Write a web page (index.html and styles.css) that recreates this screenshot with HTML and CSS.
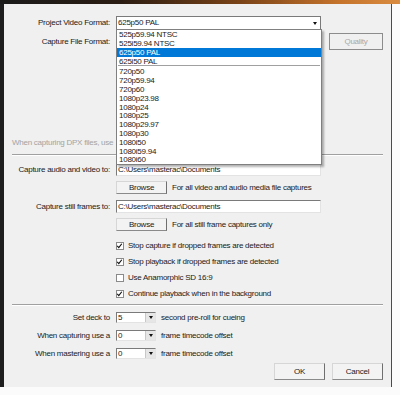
FILE: index.html
```html
<!DOCTYPE html>
<html lang="en">
<head>
    <meta charset="UTF-8">
    <meta name="viewport" content="width=device-width, initial-scale=1.0">
    <title>Capture Settings</title>
    <link rel="stylesheet" href="styles.css">
</head>
<body>
    <div class="topbar"></div>
    <div class="frame">
        <div class="dialog">
            <div class="row row-top">
                <span class="label">Project Video Format:</span>
                <div class="select wide"><span>625p50 PAL</span><i class="caret"></i></div>
            </div>
            <div class="row row-format">
                <span class="label">Capture File Format:</span>
                <!-- covered by the open list -->
                <div class="select wide"><i class="caret"></i></div>
                <button class="btn quality" disabled>Quality</button>
            </div>

            <p class="note">When capturing DPX files, use</p>
            <hr class="rule">

            <div class="row row-field">
                <span class="label">Capture audio and video to:</span>
                <div class="field">C:\Users\masterac\Documents</div>
            </div>
            <div class="row row-browse indent">
                <button class="btn browse">Browse</button>
                <span>For all video and audio media file captures</span>
            </div>
            <div class="row row-field second">
                <span class="label">Capture still frames to:</span>
                <div class="field">C:\Users\masterac\Documents</div>
            </div>
            <div class="row row-browse indent">
                <button class="btn browse">Browse</button>
                <span>For all still frame captures only</span>
            </div>

            <div class="checks">
                <label class="check"><span class="box on"><svg viewBox="0 0 8 8"><path d="M1.4 3.8 L3.2 5.9 L6.6 1.4"/></svg></span>Stop capture if dropped frames are detected</label>
                <label class="check"><span class="box on"><svg viewBox="0 0 8 8"><path d="M1.4 3.8 L3.2 5.9 L6.6 1.4"/></svg></span>Stop playback if dropped frames are detected</label>
                <label class="check"><span class="box"></span>Use Anamorphic SD 16:9</label>
                <label class="check"><span class="box on"><svg viewBox="0 0 8 8"><path d="M1.4 3.8 L3.2 5.9 L6.6 1.4"/></svg></span>Continue playback when in the background</label>
            </div>

            <hr class="rule rule-low">

            <div class="row row-small first">
                <span class="label">Set deck to</span>
                <div class="combo"><span>5</span><i class="spin"><i class="caret"></i></i></div>
                <span>second pre-roll for cueing</span>
            </div>
            <div class="row row-small">
                <span class="label">When capturing use a</span>
                <div class="combo"><span>0</span><i class="spin"><i class="caret"></i></i></div>
                <span>frame timecode offset</span>
            </div>
            <div class="row row-small">
                <span class="label">When mastering use a</span>
                <div class="combo"><span>0</span><i class="spin"><i class="caret"></i></i></div>
                <span>frame timecode offset</span>
            </div>

            <div class="actions">
                <button class="btn action">OK</button>
                <button class="btn action">Cancel</button>
            </div>
        </div>

        <!-- open list of the Project Video Format select -->
        <ul class="dropdown">
            <li>525p59.94 NTSC</li>
            <li>525i59.94 NTSC</li>
            <li class="active">625p50 PAL</li>
            <li>625i50 PAL</li>
            <li class="sep"></li>
            <li>720p50</li>
            <li>720p59.94</li>
            <li>720p60</li>
            <li>1080p23.98</li>
            <li>1080p24</li>
            <li>1080p25</li>
            <li>1080p29.97</li>
            <li>1080p30</li>
            <li>1080i50</li>
            <li>1080i59.94</li>
            <li>1080i60</li>
        </ul>
    </div>
</body>
</html>
```

FILE: styles.css
```css
body { margin: 0; background: #fbfbfb; font-family: "Liberation Sans", Arial, sans-serif; font-size: 8px; line-height: 10px; letter-spacing: -0.25px; color: #1a1a1a; }
button { font: inherit; letter-spacing: inherit; color: inherit; padding: 0; margin: 0; cursor: default; }

.topbar { height: 4px; width: 400px; background: linear-gradient(90deg, #1b1b1b 0%, #2a1c12 30%, #7a4317 60%, #c6742c 85%, #d98c40 100%); }
.frame { position: relative; box-sizing: border-box; width: 392px; height: 383px; background: #f0f0f0; border-left: 4px solid #1e1e1e; border-right: 1px solid #5e4432; }
.dialog { padding: 12px 8px 0 0; }

.row { display: flex; align-items: center; gap: 6px; }
.label { flex: none; width: 106px; text-align: right; white-space: nowrap; }
.indent { padding-left: 112px; gap: 5px; }

.row-top { height: 14px; }
.row-format { height: 17px; margin-top: 3px; }
.row-format .quality { margin-left: 2px; }

.select { box-sizing: border-box; position: relative; height: 14px; background: #fff; border: 1px solid #7a7a7a; display: flex; align-items: center; padding-left: 1px; }
.wide { width: 205px; }
.select .caret { position: absolute; right: 3px; top: 5px; }
.caret { display: block; width: 0; height: 0; border-left: 2.5px solid transparent; border-right: 2.5px solid transparent; border-top: 3px solid #111; }

.note { margin: 88px 0 0; padding-left: 8px; color: #a3a3a3; }
.rule { margin: 6px 0 0 8px; height: 0; border: 0; border-top: 1px solid #a0a0a0; border-bottom: 1px solid #fff; }
.rule-low { margin-top: 2px; }

.row-field { height: 13px; margin-top: 7px; }
.row-field.second { margin-top: 6px; }
.field { box-sizing: border-box; width: 205px; height: 13px; background: #fff; border: 1px solid; border-color: #7a7a7a #e3e3e3 #e3e3e3 #7a7a7a; padding-left: 1px; white-space: nowrap; line-height: 11px; }
.row-browse { height: 13px; margin-top: 5px; }

.btn { box-sizing: border-box; background: #f3f3f3; border: 1px solid; border-color: #d6d6d6 #6f6f6f #8a8a8a #d6d6d6; text-align: center; }
.browse { width: 51px; height: 13px; }
.quality { width: 54px; height: 17px; color: #a8a8a8; border-color: #8c8c8c; background: #f0f0f0; }

.checks { margin-top: 7px; padding-left: 112px; }
.check { display: flex; align-items: center; gap: 4px; height: 16px; white-space: nowrap; }
.box { box-sizing: border-box; width: 8px; height: 8px; background: #fff; border: 1px solid #8a8a8a; display: flex; }
.box svg { width: 8px; height: 8px; margin: -1px 0 0 -1px; fill: none; stroke: #111; stroke-width: 1.3; }

.row-small { height: 11px; margin-top: 7px; gap: 5px; }
.row-small.first { margin-top: 6px; }
.row-small .label { margin-right: 1px; }
.combo { box-sizing: border-box; width: 40px; height: 11px; background: #fff; border: 1px solid; border-color: #7a7a7a #e3e3e3 #e3e3e3 #7a7a7a; display: flex; justify-content: space-between; align-items: center; padding-left: 1px; line-height: 9px; }
.spin { display: flex; align-items: center; justify-content: center; width: 9px; height: 9px; background: #e6e6e6; border-left: 1px solid #c8c8c8; }

.actions { display: flex; justify-content: flex-end; gap: 7px; margin-top: 4px; }
.action { width: 51px; height: 17px; }

.dropdown { position: absolute; left: 112px; top: 25px; box-sizing: border-box; width: 206px; margin: 0; padding: 0; list-style: none; background: #fff; border: 1px solid #808080; box-shadow: 2px 2px 2px rgba(0, 0, 0, 0.3); }
.dropdown li { height: 8.8px; line-height: 9px; padding-left: 2px; white-space: nowrap; }
.dropdown .active { height: 9px; background: #0078d7; color: #fff; }
.dropdown .sep { height: 0; margin: 0 1px; padding: 0; border-top: 1px solid #a0a0a0; border-bottom: 1px solid #fff; }
```
